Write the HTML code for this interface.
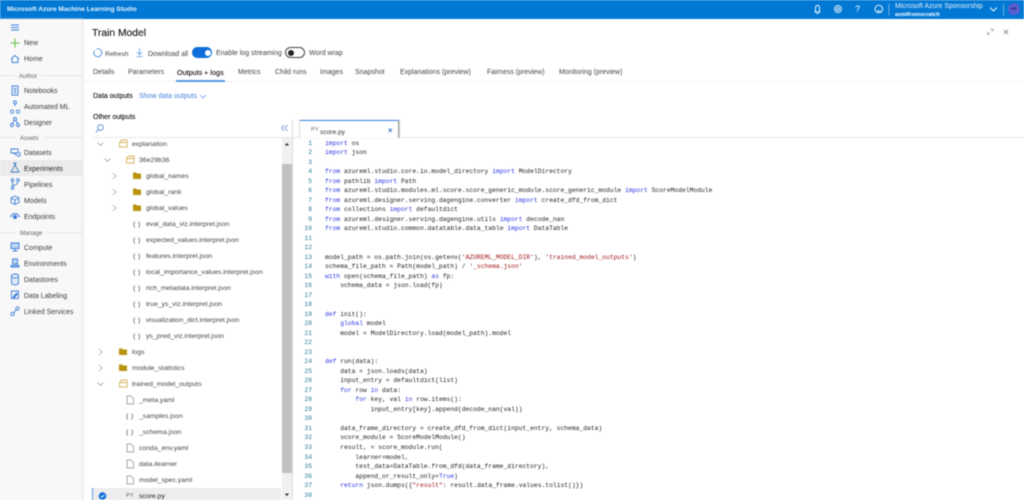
<!DOCTYPE html>
<html><head><meta charset="utf-8">
<style>
*{box-sizing:border-box}
html,body{margin:0;padding:0;width:1024px;height:500px;overflow:hidden;background:#fff}
body{font-family:"Liberation Sans",sans-serif;font-size:7px;color:#444}
#w{position:absolute;left:0;top:0;width:1024px;height:500px;overflow:hidden;background:#fff;filter:blur(.4px)}
.t{position:absolute;white-space:nowrap;line-height:10px}
.r{position:absolute}
svg{position:absolute;overflow:visible}
.nav{font-size:7px;color:#3c3c3c;left:24px;margin-top:1.5px}
.sec{font-size:6.2px;color:#666;margin-top:1.5px}
.tab{font-size:7px;top:67.5px;color:#444}
.f{font-size:6.85px;color:#444;margin-top:2.5px}
pre{margin:0;position:absolute;font-family:"Liberation Mono",monospace;font-size:6.33px;line-height:9.51px;color:#222}
.k{color:#2b35e0}.s{color:#a31515}
</style></head><body><div id="w">
<div class="r" style="left:0;top:0;width:1024px;height:19px;background:#0078d4"></div>
<div class="t" style="left:7px;top:4.500px;color:#e6f2fb;font-size:6.600px;font-weight:700">Microsoft Azure Machine Learning Studio</div>
<svg style="left:0;top:0" width="1024" height="19" fill="none" stroke="#fff" stroke-width=".9">
<path d="M815.500 12V7.500a2 2 0 0 1 4 0V12zM814.500 12h6M816.500 13.500h2"/>
<circle cx="838" cy="9" r="3.400"/><circle cx="838" cy="9" r="1.400"/>
<path d="M875 9a3.800 3.800 0 1 0 7.600 0a3.800 3.800 0 1 0-7.600 0M877 10.500q1.800 1.500 3.600 0"/>
<path d="M889 3.500V15.500M1003.500 3.500V15.500" stroke="#7db8e6"/>
<path d="M990 7.500l3.500 3.500 3.500-3.500"/>
</svg>
<div class="t" style="left:855px;top:4px;color:#fff;font-size:9px">?</div>
<div class="t" style="left:895px;top:1.500px;color:#e6f2fb;font-size:6.900px">Microsoft Azure Sponsorship</div>
<div class="t" style="left:895px;top:9.500px;color:#fff;font-size:5.600px;font-weight:700">azmlfromscratch</div>
<div class="r" style="left:1008px;top:3px;width:12px;height:12px;border-radius:50%;background:#5a5fd0;color:#1b1b70;font-size:4px;font-weight:700;text-align:center;line-height:12px">PP</div>

<div class="r" style="left:0;top:19px;width:82px;height:481px;background:#f8f8f8;box-shadow:1px 0 2px #ddd"></div>
<div class="r" style="left:0;top:160px;width:82px;height:16px;background:#ebebeb"></div>
<svg style="left:0;top:0" width="82" height="330" fill="none" stroke="#3f7fd6" stroke-width=".9">
<path d="M11 25h8M11 27.500h8M11 30h8"/>
<path d="M15 38.500v9M10.500 43h9" stroke="#6cbf4b" stroke-width="1.100"/>
<path d="M11 59l4-3.500 4 3.500M12 58.500v4h6v-4"/>
<path d="M12 86h6v9h-6zM13.500 88.500h3M13.500 90.500h3M13.500 92.500h3"/>
<circle cx="15" cy="102.500" r="1.500"/><path d="M15 104v2M12 110a1.700 1.700 0 1 0 .1 0M18 110a1.700 1.700 0 1 0 .1 0"/>
<circle cx="15" cy="119" r="1.500"/><circle cx="12" cy="125" r="1.500"/><circle cx="18" cy="125" r="1.500"/><path d="M14 120.500l-1.500 3M16 120.500l1.500 3"/>
<path d="M11 149h7v4h-7zM13 153l5 3h2v-4"/>
<path d="M13.500 163h3M14.500 163v3l-3.500 6h8l-3.500-6v-3" stroke="#4a80c8"/>
<circle cx="12.500" cy="180" r="1.300"/><circle cx="12.500" cy="188" r="1.300"/><circle cx="18" cy="180" r="1.300"/><path d="M12.500 181.500v5M18 181.500q0 3-5 4"/>
<path d="M15 196l4 2v4.500l-4 2-4-2V198zM11 198l4 2 4-2M15 200v4.500"/>
<path d="M11 217a4 3.500 0 0 1 8 0"/><circle cx="15" cy="217" r="1.700" fill="#3f7fd6"/><path d="M10 216.500h1.500M18.500 216.500H20"/>
<path d="M11 243h8v5.500h-8z" fill="#bcd6f3"/><path d="M15 248.500v2M12.500 251h5"/>
<path d="M12.500 259h5v5h-5zM11 265.500h8v1.500h-8z" fill="#bcd6f3"/>
<path d="M11.500 276c0-2.500 7-2.500 7 0v7c0 2.500-7 2.500-7 0zM11.500 276c0 2.500 7 2.500 7 0" fill="#dce9f8"/>
<path d="M11.500 291h7v7.500h-7z"/><path d="M13 297l3.500-4 1 1-3.500 4z" fill="#3f7fd6"/>
<circle cx="12.500" cy="314" r="1.700"/><circle cx="17.500" cy="308.500" r="1.700"/><path d="M13.500 313l3-3.500"/>
</svg>
<div class="t nav" style="top:37.500px">New</div>
<div class="t nav" style="top:53.500px">Home</div>
<div class="r" style="left:0;top:75px;width:82px;height:1px;background:#e6e6e6"></div>
<div class="t sec" style="left:15px;top:70.500px;background:#f8f8f8;padding:0 4px">Author</div>
<div class="t nav" style="top:85px">Notebooks</div>
<div class="t nav" style="top:101px">Automated ML</div>
<div class="t nav" style="top:117px">Designer</div>
<div class="r" style="left:0;top:137px;width:82px;height:1px;background:#e6e6e6"></div>
<div class="t sec" style="left:16px;top:132.500px;background:#f8f8f8;padding:0 4px">Assets</div>
<div class="t nav" style="top:147px">Datasets</div>
<div class="t nav" style="top:163px;color:#222">Experiments</div>
<div class="t nav" style="top:179px">Pipelines</div>
<div class="t nav" style="top:195px">Models</div>
<div class="t nav" style="top:211px">Endpoints</div>
<div class="r" style="left:0;top:232px;width:82px;height:1px;background:#e6e6e6"></div>
<div class="t sec" style="left:16px;top:227.500px;background:#f8f8f8;padding:0 4px">Manage</div>
<div class="t nav" style="top:242px">Compute</div>
<div class="t nav" style="top:258px">Environments</div>
<div class="t nav" style="top:274px">Datastores</div>
<div class="t nav" style="top:290px">Data Labeling</div>
<div class="t nav" style="top:306px">Linked Services</div>

<div class="t" style="left:92px;top:28px;font-size:10.300px;color:#222;line-height:12px;text-shadow:0 0 .3px #222">Train Model</div>
<svg style="left:0;top:0" width="1024" height="140" fill="none" stroke="#777" stroke-width=".8">
<path d="M1004 30l4 4M1008 30l-4 4"/>
<path d="M987.500 34.500l2-2M991 31l2-2M990.500 29h2.500v2.500M987.500 32v2.500h2.500" stroke="#aaa"/>
<path d="M94.500 50.500a4 4 0 1 0 2-1.500" stroke="#5a9ae0" stroke-width="1"/>
<path d="M139.500 48v6M137 52l2.500 2.500 2.500-2.500M136.500 56.500h6" stroke="#5a9ae0"/>
<path d="M200 95l3 3 3-3" stroke="#6a9be0"/>
<circle cx="100.500" cy="127.500" r="2.800" stroke="#3f7fd6"/><path d="M98.500 129.500l-2.500 2.800" stroke="#3f7fd6"/>
<path d="M284 125l-2.500 3 2.500 3M287.500 125l-2.500 3 2.500 3" stroke="#5a8ad6"/>
</svg>
<div class="t" style="left:105px;top:49.500px;font-size:6.700px;color:#444">Refresh</div>
<div class="t" style="left:148px;top:49.500px;font-size:7px;color:#444">Download all</div>
<div class="r" style="left:192px;top:47px;width:20px;height:11px;border-radius:6px;background:#0f6fd8"></div>
<div class="r" style="left:204.500px;top:49.500px;width:6px;height:6px;border-radius:50%;background:#fff"></div>
<div class="t" style="left:216px;top:48.500px;font-size:7px;color:#444">Enable log streaming</div>
<div class="r" style="left:285px;top:47px;width:20px;height:11px;border-radius:6px;background:#fff;border:1px solid #444"></div>
<div class="r" style="left:287.500px;top:49.500px;width:6px;height:6px;border-radius:50%;background:#222"></div>
<div class="t" style="left:309px;top:48.500px;font-size:7px;color:#444">Word wrap</div>

<div class="t tab" style="left:93px">Details</div>
<div class="t tab" style="left:128px">Parameters</div>
<div class="t tab" style="left:177px;font-size:7.200px;color:#222;text-shadow:0 0 .3px #222">Outputs + logs</div>
<div class="t tab" style="left:238px">Metrics</div>
<div class="t tab" style="left:275px">Child runs</div>
<div class="t tab" style="left:320px">Images</div>
<div class="t tab" style="left:355px">Snapshot</div>
<div class="t tab" style="left:400px">Explanations (preview)</div>
<div class="t tab" style="left:487px">Fairness (preview)</div>
<div class="t tab" style="left:559px">Monitoring (preview)</div>
<div class="r" style="left:83px;top:81px;width:941px;height:1px;background:#f1f1f1"></div>
<div class="r" style="left:176px;top:80px;width:49px;height:1.500px;background:#5a9ae0"></div>

<div class="t" style="left:93px;top:92px;font-size:7px;color:#222;text-shadow:0 0 .2px #222">Data outputs</div>
<div class="t" style="left:139px;top:92px;font-size:7px;color:#3f7ede">Show data outputs</div>
<div class="t" style="left:93px;top:112.500px;font-size:7px;color:#222;text-shadow:0 0 .2px #222">Other outputs</div>

<div class="r" style="left:92px;top:137px;width:932px;height:1px;background:#e8e8e8"></div>
<div class="r" style="left:292px;top:120px;width:1px;height:380px;background:#ddd"></div>
<div class="r" style="left:299px;top:120px;width:100px;height:18px;background:#fff;border-top:1.500px solid #3f86dd;border-right:1px solid #999;border-left:1px solid #ddd;box-shadow:1px 0 1px #ccc"></div>
<div class="t" style="left:311px;top:124.500px;font-size:5.800px;color:#666">PY</div>
<div class="t" style="left:320px;top:127.500px;font-size:6.600px;color:#333">score.py</div>
<svg style="left:0;top:0" width="400" height="140" fill="none" stroke="#3f7fd6" stroke-width=".9"><path d="M388.500 128.500l3.500 3.500M392 128.500l-3.500 3.500"/></svg>

<div class="r" style="left:282px;top:138px;width:10px;height:362px;background:#f1f1f1"></div>
<div class="r" style="left:282px;top:164px;width:10px;height:309px;background:#c1c1c1"></div>
<svg style="left:0;top:0" width="300" height="500">
<path d="M284.700 145.500h4.400l-2.200-2.600zM284.700 493.500h4.400l-2.200 2.600z" fill="#333"/>
<g fill="none" stroke="#999" stroke-width=".7">
<path d="M97.500 142.500l3 3 3-3M104.500 158.500l3 3 3-3M97.500 382.500l3 3 3-3"/>
<path d="M113 173l3 3-3 3M113 189l3 3-3 3M113 205l3 3-3 3M99 349l3 3-3 3M99 365l3 3-3 3"/>
</g>
<g fill="none" stroke="#d4b45a" stroke-width=".9">
<path d="M119.500 142.500l2-2.500h5.500v7h-7.500zM119.500 142.500h7.500"/>
<path d="M126.500 158.500l2-2.500h5.500v7h-7.500zM126.500 158.500h7.500"/>
<path d="M119.500 382.500l2-2.500h5.500v7h-7.500zM119.500 382.500h7.500"/>
</g>
<g fill="#b8930f">
<path d="M133 172.500h3l1 1h4v5.500h-8zM133 188.500h3l1 1h4v5.500h-8zM133 204.500h3l1 1h4v5.500h-8zM119 348.500h3l1 1h4v5.500h-8zM119 364.500h3l1 1h4v5.500h-8z"/>
</g>
<g fill="none" stroke="#888" stroke-width=".7">
<path d="M127 396h4l2.500 2.500v5.500H127zM127 444h4l2.500 2.500v5.500H127zM127 460h4l2.500 2.500v5.500H127zM127 476h4l2.500 2.500v5.500H127z"/>
</g>
</svg>
<div class="t f" style="left:133px;top:217px;letter-spacing:.5px">{ }</div>
<div class="t f" style="left:133px;top:233px;letter-spacing:.5px">{ }</div>
<div class="t f" style="left:133px;top:249px;letter-spacing:.5px">{ }</div>
<div class="t f" style="left:133px;top:265px;letter-spacing:.5px">{ }</div>
<div class="t f" style="left:133px;top:281px;letter-spacing:.5px">{ }</div>
<div class="t f" style="left:133px;top:297px;letter-spacing:.5px">{ }</div>
<div class="t f" style="left:133px;top:313px;letter-spacing:.5px">{ }</div>
<div class="t f" style="left:133px;top:329px;letter-spacing:.5px">{ }</div>
<div class="t f" style="left:126px;top:409px;letter-spacing:.5px">{ }</div>
<div class="t f" style="left:126px;top:425px;letter-spacing:.5px">{ }</div>

<div class="t f" style="left:132px;top:137.500px">explanation</div>
<div class="t f" style="left:139px;top:153.500px">36e29b36</div>
<div class="t f" style="left:146px;top:169.500px">global_names</div>
<div class="t f" style="left:146px;top:185.500px">global_rank</div>
<div class="t f" style="left:146px;top:201.500px">global_values</div>
<div class="t f" style="left:146px;top:217.500px">eval_data_viz.interpret.json</div>
<div class="t f" style="left:146px;top:233.500px">expected_values.interpret.json</div>
<div class="t f" style="left:146px;top:249.500px">features.interpret.json</div>
<div class="t f" style="left:146px;top:265.500px">local_importance_values.interpret.json</div>
<div class="t f" style="left:146px;top:281.500px">rich_metadata.interpret.json</div>
<div class="t f" style="left:146px;top:297.500px">true_ys_viz.interpret.json</div>
<div class="t f" style="left:146px;top:313.500px">visualization_dict.interpret.json</div>
<div class="t f" style="left:146px;top:329.500px">ys_pred_viz.interpret.json</div>
<div class="t f" style="left:132px;top:345.500px">logs</div>
<div class="t f" style="left:132px;top:361.500px">module_statistics</div>
<div class="t f" style="left:132px;top:377.500px">trained_model_outputs</div>
<div class="t f" style="left:139px;top:393.500px">_meta.yaml</div>
<div class="t f" style="left:139px;top:409.500px">_samples.json</div>
<div class="t f" style="left:139px;top:425.500px">_schema.json</div>
<div class="t f" style="left:139px;top:441.500px">conda_env.yaml</div>
<div class="t f" style="left:139px;top:457.500px">data.ilearner</div>
<div class="t f" style="left:139px;top:473.500px">model_spec.yaml</div>
<div class="r" style="left:92px;top:488px;width:189px;height:12px;background:#ededed;border-left:1px solid #5a9ae0"></div>
<svg style="left:0;top:0" width="120" height="500"><circle cx="102.500" cy="496" r="3.800" fill="#0f6fd8"/><path d="M100.700 496l1.300 1.300 2.300-2.500" fill="none" stroke="#fff" stroke-width=".8"/></svg>
<div class="t" style="left:126px;top:490.500px;font-size:5.800px;color:#666">PY</div>
<div class="t f" style="left:139px;top:489px;color:#222">score.py</div>

<pre style="left:296px;top:138.500px;width:16px;text-align:right;color:#237893">1
2
3
4
5
6
7
8
9
10
11
12
13
14
15
16
17
18
19
20
21
22
23
24
25
26
27
28
29
30
31
32
33
34
35
36
37
38</pre>
<pre style="left:325px;top:138.500px"><span class="k">import</span> os
<span class="k">import</span> json

<span class="k">from</span> azureml.studio.core.io.model_directory <span class="k">import</span> ModelDirectory
<span class="k">from</span> pathlib <span class="k">import</span> Path
<span class="k">from</span> azureml.studio.modules.ml.score.score_generic_module.score_generic_module <span class="k">import</span> ScoreModelModule
<span class="k">from</span> azureml.designer.serving.dagengine.converter <span class="k">import</span> create_dfd_from_dict
<span class="k">from</span> collections <span class="k">import</span> defaultdict
<span class="k">from</span> azureml.designer.serving.dagengine.utils <span class="k">import</span> decode_nan
<span class="k">from</span> azureml.studio.common.datatable.data_table <span class="k">import</span> DataTable


model_path = os.path.join(os.getenv(<span class="s">'AZUREML_MODEL_DIR'</span>), <span class="s">'trained_model_outputs'</span>)
schema_file_path = Path(model_path) / <span class="s">'_schema.json'</span>
<span class="k">with</span> open(schema_file_path) <span class="k">as</span> fp:
    schema_data = json.load(fp)


<span class="k">def</span> init():
    <span class="k">global</span> model
    model = ModelDirectory.load(model_path).model


<span class="k">def</span> run(data):
    data = json.loads(data)
    input_entry = defaultdict(list)
    <span class="k">for</span> row <span class="k">in</span> data:
        <span class="k">for</span> key, val <span class="k">in</span> row.items():
            input_entry[key].append(decode_nan(val))

    data_frame_directory = create_dfd_from_dict(input_entry, schema_data)
    score_module = ScoreModelModule()
    result, = score_module.run(
        learner=model,
        test_data=DataTable.from_dfd(data_frame_directory),
        append_or_result_only=<span class="k">True</span>)
    <span class="k">return</span> json.dumps({<span class="s">"result"</span>: result.data_frame.values.tolist()})
</pre>
</div></body></html>
